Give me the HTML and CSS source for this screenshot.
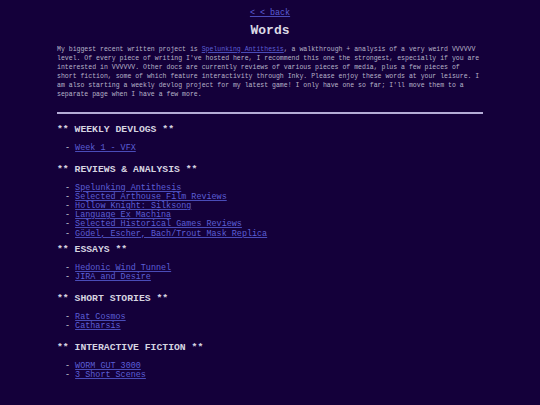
FILE: index.html
```html
<!DOCTYPE html>
<html lang="en">
<head>
<meta charset="utf-8">
<title>Words</title>
<link rel="stylesheet" href="styles.css">
</head>
<body>
<main class="page">
  <a class="back" href="#">&lt; &lt; back</a>
  <h1 class="title">Words</h1>
  <p class="intro">My biggest recent written project is <a href="#">Spelunking Antithesis</a>, a walkthrough + analysis of a very weird VVVVVV level. Of every piece of writing I've hosted here, I recommend this one the strongest, especially if you are interested in VVVVVV. Other docs are currently reviews of various pieces of media, plus a few pieces of short fiction, some of which feature interactivity through Inky. Please enjoy these words at your leisure. I am also starting a weekly devlog project for my latest game! I only have one so far; I'll move them to a separate page when I have a few more.</p>
  <hr class="rule">
  <section class="group">
    <h2 class="group-title">** WEEKLY DEVLOGS **</h2>
    <ul class="links">
      <li><a href="#">Week 1 - VFX</a></li>
    </ul>
  </section>
  <section class="group group-tight">
    <h2 class="group-title">** REVIEWS &amp; ANALYSIS **</h2>
    <ul class="links">
      <li><a href="#">Spelunking Antithesis</a></li>
      <li><a href="#">Selected Arthouse Film Reviews</a></li>
      <li><a href="#">Hollow Knight: Silksong</a></li>
      <li><a href="#">Language Ex Machina</a></li>
      <li><a href="#">Selected Historical Games Reviews</a></li>
      <li><a href="#">Gödel, Escher, Bach/Trout Mask Replica</a></li>
    </ul>
  </section>
  <section class="group">
    <h2 class="group-title">** ESSAYS **</h2>
    <ul class="links">
      <li><a href="#">Hedonic Wind Tunnel</a></li>
      <li><a href="#">JIRA and Desire</a></li>
    </ul>
  </section>
  <section class="group">
    <h2 class="group-title">** SHORT STORIES **</h2>
    <ul class="links">
      <li><a href="#">Rat Cosmos</a></li>
      <li><a href="#">Catharsis</a></li>
    </ul>
  </section>
  <section class="group">
    <h2 class="group-title">** INTERACTIVE FICTION **</h2>
    <ul class="links">
      <li><a href="#">WORM GUT 3000</a></li>
      <li><a href="#">3 Short Scenes</a></li>
    </ul>
  </section>
</main>
</body>
</html>
```

FILE: styles.css
```css
html, body {
  margin: 0;
  padding: 0;
  background: #14003a;
}

body {
  font-family: "Liberation Mono", "DejaVu Sans Mono", monospace;
  color: #c9c7d8;
}

a {
  color: #5b5fd6;
  text-decoration: underline;
  text-decoration-color: #4a4cb8;
}

.page {
  width: 426px;
  margin: 0 auto;
  padding-top: 7px;
  display: flex;
  flex-direction: column;
}

.back {
  align-self: center;
  font-size: 8.4px;
  line-height: 12px;
}

.title {
  margin: 4px 0 0;
  text-align: center;
  font-size: 13px;
  line-height: 16px;
  font-weight: bold;
  color: #dcdae6;
}

.intro {
  margin: 5.5px 0 0;
  font-size: 6.53px;
  line-height: 9px;
  color: #b6b3c8;
}

.rule {
  margin: 13.5px 0 0;
  border: 0;
  height: 2px;
  background: #b4acd6;
}

.group {
  margin-top: 10px;
}

.group + .group {
  margin-top: 10.3px;
}

.group-tight + .group {
  margin-top: 5.5px;
}

.group-title {
  margin: 0;
  font-size: 9.75px;
  line-height: 12px;
  font-weight: bold;
  color: #d6d4e0;
}

.links {
  list-style: none;
  margin: 8px 0 0;
  padding: 0 0 0 8px;
  font-size: 8.43px;
  line-height: 9.2px;
}

.links li::before {
  content: "- ";
  color: #c9c7d8;
}
```
